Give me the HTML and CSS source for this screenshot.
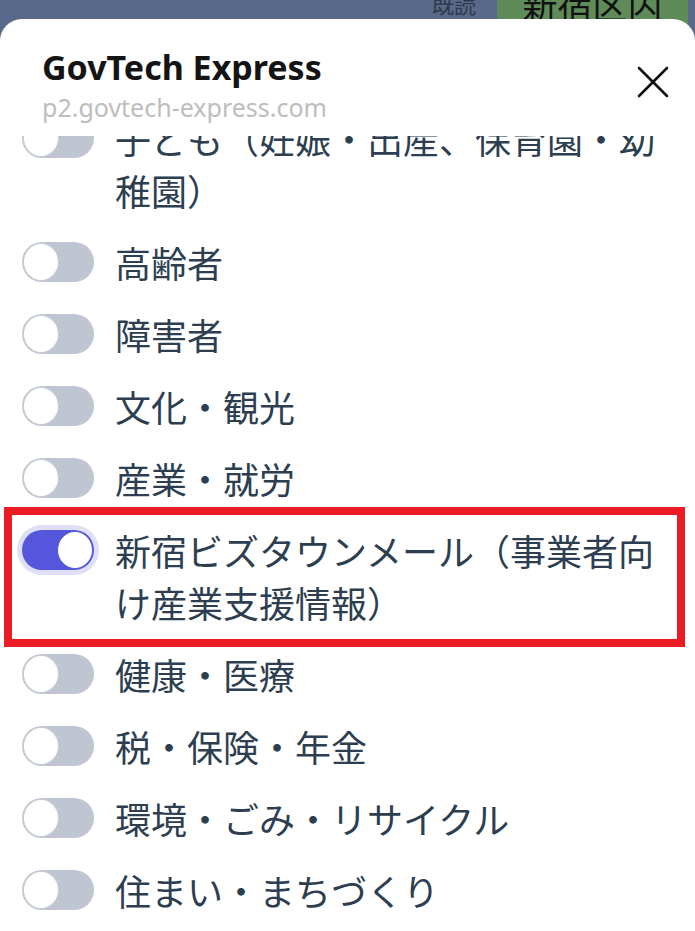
FILE: index.html
```html
<!DOCTYPE html>
<html lang="ja">

<head>
    <meta charset="UTF-8">
    <meta name="viewport" content="width=device-width, initial-scale=1.0">
    <title>GovTech Express</title>
    <link rel="stylesheet" href="styles.css">
</head>

<body>

    <div class="backdrop">
        <div class="read-state">
            <span>既読</span>
            <span>12:12</span>
        </div>
        <div class="bubble">新宿区内</div>
    </div>

    <section class="sheet">
        <header class="sheet-head">
            <div class="sheet-title">
                <h1>GovTech Express</h1>
                <p>p2.govtech-express.com</p>
            </div>
            <button class="close" aria-label="閉じる">
                <svg width="32" height="32" viewBox="0 0 32 32">
                    <path d="M2 2 L30 30 M30 2 L2 30" stroke="#111" stroke-width="2.6" stroke-linecap="round" fill="none"/>
                </svg>
            </button>
        </header>

        <div class="list-scroll">
            <ul class="topics">
                <li><span class="toggle"></span><span class="label">子ども（妊娠・出産、保育園・幼稚園）</span></li>
                <li><span class="toggle"></span><span class="label">高齢者</span></li>
                <li><span class="toggle"></span><span class="label">障害者</span></li>
                <li><span class="toggle"></span><span class="label">文化・観光</span></li>
                <li><span class="toggle"></span><span class="label">産業・就労</span></li>
                <li class="marked"><span class="toggle on"></span><span class="label">新宿ビズタウンメール（事業者向け産業支援情報）</span></li>
                <li><span class="toggle"></span><span class="label">健康・医療</span></li>
                <li><span class="toggle"></span><span class="label">税・保険・年金</span></li>
                <li><span class="toggle"></span><span class="label">環境・ごみ・リサイクル</span></li>
                <li><span class="toggle"></span><span class="label">住まい・まちづくり</span></li>
                <li><span class="toggle"></span><span class="label">防災・防犯</span></li>
            </ul>
        </div>
    </section>

</body>

</html>
```

FILE: styles.css
```css
body {
    margin: 0;
    padding: 0;
    height: 931px;
    overflow: hidden;
    background-color: #58698a;
    font-family: "Noto Sans", "Noto Sans CJK JP", sans-serif;
}

.backdrop {
    height: 40px;
    display: flex;
    justify-content: flex-end;
    overflow: hidden;
}

.read-state {
    display: flex;
    flex-direction: column;
    align-items: flex-end;
    margin-top: -10px;
    margin-right: 21px;
    font-family: "Noto Sans CJK JP", sans-serif;
    font-size: 22px;
    line-height: 27px;
    color: #2f3a4c;
}

.bubble {
    width: 191px;
    margin-right: 7px;
    margin-top: -20px;
    background-color: #5f8b58;
    border-radius: 8px;
    font-family: "Noto Sans CJK JP", sans-serif;
    font-size: 35px;
    line-height: 50px;
    text-align: center;
    color: #111;
}

.sheet {
    position: relative;
    z-index: 1;
    margin-top: -21px;
    height: 912px;
    background-color: #ffffff;
    border-radius: 22px 22px 0 0;
    display: flex;
    flex-direction: column;
    overflow: hidden;
}

.sheet-head {
    display: flex;
    justify-content: space-between;
    align-items: flex-start;
    padding: 28px 26px 13px 42px;
}

.sheet-title h1 {
    margin: 0;
    font-size: 34px;
    line-height: 40px;
    font-weight: 700;
    color: #141414;
}

.sheet-title p {
    margin: 4px 0 0 0;
    font-size: 25px;
    line-height: 32px;
    color: #bdbdbd;
}

.close {
    margin-top: 19px;
    padding: 0;
    border: none;
    background: none;
    width: 32px;
    height: 32px;
}

.close svg {
    display: block;
}

.list-scroll {
    flex: 1;
    overflow: hidden;
}

.topics {
    list-style: none;
    margin: -34px 0 0 0;
    padding: 0 22px;
}

.topics li {
    display: flex;
    align-items: flex-start;
    gap: 21px;
    padding: 10px 0;
    position: relative;
}

.label {
    font-family: "Noto Sans CJK JP", sans-serif;
    font-size: 36px;
    line-height: 52px;
    color: #2c3e50;
    flex: 1;
}

.toggle {
    flex: none;
    width: 72px;
    height: 40px;
    margin-top: 6px;
    border-radius: 20px;
    background-color: #bfc5d1;
    position: relative;
}

.toggle::before {
    content: "";
    position: absolute;
    left: 1px;
    top: 1px;
    width: 34px;
    height: 36px;
    border-radius: 50%;
    background-color: #ffffff;
    border: 1px solid #c6cbd5;
}

.toggle.on {
    background-color: #5457db;
    box-shadow: 0 0 0 5px #dfdff7;
}

.toggle.on::before {
    left: auto;
    right: 1px;
    border-color: #5457db;
}

.marked::after {
    content: "";
    position: absolute;
    top: -7px;
    bottom: -9px;
    left: -18px;
    right: -12px;
    border: 8px solid #ec1c24;
    pointer-events: none;
}
```
